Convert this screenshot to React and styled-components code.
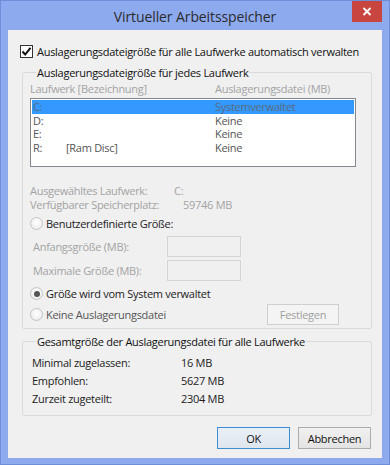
import React from "react";
import styled, { createGlobalStyle, css } from "styled-components";

const FONT = `"Segoe UI", "Open Sans", "Noto Sans", sans-serif`;

const Global = createGlobalStyle`
  html, body { margin: 0; padding: 0; background: #ffffff; }
  body { font-family: ${FONT}; font-size: 11px; letter-spacing: -0.28px; }
  * { box-sizing: border-box; }
`;

const Window = styled.div`
  width: 390px;
  height: 465px;
  background: #8eaaef;
  border: 1px solid #6f8ed9;
  padding: 0 7px 6px 7px;
  display: flex;
  flex-direction: column;
`;

const TitleBar = styled.div`
  height: 29px;
  display: grid;
  grid-template-columns: 30px 1fr 30px;
  align-items: start;
`;

const Title = styled.div`
  grid-column: 2;
  text-align: center;
  font-size: 14px;
  letter-spacing: -0.1px;
  line-height: 20px;
  padding-top: 6px;
  color: #2b2b2b;
`;

const CloseButton = styled.div`
  grid-column: 3;
  width: 30px;
  height: 21px;
  background: #c8463f;
  display: flex;
  align-items: center;
  justify-content: center;
`;

const Client = styled.div`
  flex: 1;
  background: #f0f0f0;
  padding: 14px 10px 0 12px;
  display: flex;
  flex-direction: column;
`;

const CheckRow = styled.label`
  display: flex;
  align-items: center;
  gap: 4px;
  height: 15px;
  line-height: 15px;
  color: #111;
  white-space: nowrap;
`;

const CheckBox = styled.span`
  width: 13px;
  height: 13px;
  border: 1px solid #333;
  background: #fff;
  display: flex;
  align-items: center;
  justify-content: center;
`;

const Group = styled.fieldset`
  margin: ${(p) => p.$mt}px 0 0 2px;
  padding: 0 0 0 7px;
  border: 1px solid #dadada;
  border-radius: 2px;
  min-width: 0;
  height: ${(p) => p.$h}px;
  display: flex;
  flex-direction: column;
`;

const Legend = styled.legend`
  padding: 0 1px;
  margin-left: 6px;
  line-height: 15px;
  color: #111;
`;

const Line = styled.div`
  display: flex;
  align-items: center;
  height: ${(p) => p.$h || 14}px;
  line-height: 15px;
  margin-top: ${(p) => p.$mt || 0}px;
  color: ${(p) => (p.$dim ? "#a3a3a3" : "#222")};
  white-space: nowrap;
`;

const Cell = styled.span`
  width: ${(p) => p.$w}px;
  flex: none;
  padding-left: ${(p) => p.$pl || 0}px;
`;

const ListBox = styled.div`
  width: 326px;
  height: 69px;
  margin-top: 2px;
  border: 1px solid #828790;
  background: #fff;
  padding: 1px 1px;
`;

const ListRow = styled.div`
  display: flex;
  height: 13.7px;
  line-height: 13.7px;
  padding-left: 1px;
  color: #555;
  ${(p) =>
    p.$selected &&
    css`
      background: #3399ff;
      color: #5c6a7c;
    `}
`;

const RadioRow = styled.div`
  display: flex;
  align-items: center;
  gap: 3px;
  height: 21px;
  color: ${(p) => (p.$strong ? "#222" : "#555")};
  white-space: nowrap;
`;

const Radio = styled.span`
  width: 13px;
  height: 13px;
  border-radius: 50%;
  border: 1px solid #c4c4c4;
  background: radial-gradient(circle at 50% 40%, #ffffff, #e8e8e8);
  display: flex;
  align-items: center;
  justify-content: center;
  &::after {
    content: "";
    width: 6px;
    height: 6px;
    border-radius: 50%;
    background: ${(p) => (p.$checked ? "#555" : "transparent")};
  }
`;

const FieldRow = styled.div`
  display: flex;
  align-items: center;
  height: ${(p) => p.$h}px;
  padding-left: 3px;
  color: #a3a3a3;
`;

const FieldLabel = styled.span`
  width: 134px;
`;

const TextBox = styled.span`
  width: 74px;
  height: 21px;
  border: 1px solid #d4d4d4;
  background: #f0f0f0;
`;

const SpreadRow = styled.div`
  display: flex;
  align-items: center;
  justify-content: space-between;
  padding-right: 32px;
`;

const Button = styled.div`
  width: ${(p) => p.$w || 73}px;
  height: ${(p) => p.$h || 22}px;
  display: flex;
  align-items: center;
  justify-content: center;
  border: 1px solid ${(p) => (p.$default ? "#3c8dd3" : p.$disabled ? "#cfcfcf" : "#acacac")};
  background: ${(p) =>
    p.$disabled
      ? "#f4f4f4"
      : p.$default
      ? "linear-gradient(#eaf0f6, #dfe6ee)"
      : "linear-gradient(#f1f1f1, #e3e3e3)"};
  color: ${(p) => (p.$disabled ? "#a0a0a0" : "#111")};
`;

const Footer = styled.div`
  display: flex;
  justify-content: flex-end;
  gap: 8px;
  margin-top: 11px;
  padding-right: 1px;
`;

const drives = [
  { d: "C:", label: "", v: "Systemverwaltet", sel: true },
  { d: "D:", label: "", v: "Keine" },
  { d: "E:", label: "", v: "Keine" },
  { d: "R:", label: "[Ram Disc]", v: "Keine" },
];

const totals = [
  ["Minimal zugelassen:", "16 MB"],
  ["Empfohlen:", "5627 MB"],
  ["Zurzeit zugeteilt:", "2304 MB"],
];

export default function App() {
  return (
    <>
      <Global />
      <Window>
        <TitleBar>
          <Title>Virtueller Arbeitsspeicher</Title>
          <CloseButton>
            <svg width="10" height="9" viewBox="0 0 10 9">
              <path d="M1.5 1 L8.5 8 M8.5 1 L1.5 8" stroke="#fff" strokeWidth="1.8" />
            </svg>
          </CloseButton>
        </TitleBar>
        <Client>
          <CheckRow>
            <CheckBox>
              <svg width="11" height="11" viewBox="0 0 11 11">
                <path d="M1.5 5.5 L4.2 8.5 L9.5 1.8" stroke="#111" strokeWidth="2" fill="none" />
              </svg>
            </CheckBox>
            Auslagerungsdateigröße für alle Laufwerke automatisch verwalten
          </CheckRow>
          <Group $mt={6} $h={264}>
            <Legend>Auslagerungsdateigröße für jedes Laufwerk</Legend>
            <Line $dim $h={15} $mt={1}>
              <Cell $w={185}>Laufwerk [Bezeichnung]</Cell>
              <Cell>Auslagerungsdatei (MB)</Cell>
            </Line>
            <ListBox>
              {drives.map((r) => (
                <ListRow key={r.d} $selected={r.sel}>
                  <Cell $w={33}>{r.d}</Cell>
                  <Cell $w={149}>{r.label}</Cell>
                  <span>{r.v}</span>
                </ListRow>
              ))}
            </ListBox>
            <Line $dim $mt={16}>
              <Cell $w={144}>Ausgewähltes Laufwerk:</Cell>
              <span>C:</span>
            </Line>
            <Line $dim>
              <Cell $w={153}>Verfügbarer Speicherplatz:</Cell>
              <span>59746 MB</span>
            </Line>
            <RadioRow $strong style={{ marginTop: 2 }}>
              <Radio />
              Benutzerdefinierte Größe:
            </RadioRow>
            <FieldRow $h={24}>
              <FieldLabel>Anfangsgröße (MB):</FieldLabel>
              <TextBox />
            </FieldRow>
            <FieldRow $h={25}>
              <FieldLabel>Maximale Größe (MB):</FieldLabel>
              <TextBox />
            </FieldRow>
            <RadioRow $strong>
              <Radio $checked />
              Größe wird vom System verwaltet
            </RadioRow>
            <SpreadRow>
              <RadioRow>
                <Radio />
                Keine Auslagerungsdatei
              </RadioRow>
              <Button $disabled $w={72} $h={21}>Festlegen</Button>
            </SpreadRow>
          </Group>
          <Group $mt={5} $h={82}>
            <Legend>Gesamtgröße der Auslagerungsdatei für alle Laufwerke</Legend>
            {totals.map(([k, v], i) => (
              <Line key={k} $h={18} $mt={i === 0 ? 4 : 0}>
                <Cell $w={151} $pl={2}>{k}</Cell>
                <span>{v}</span>
              </Line>
            ))}
          </Group>
          <Footer>
            <Button $default>OK</Button>
            <Button>Abbrechen</Button>
          </Footer>
        </Client>
      </Window>
    </>
  );
}
